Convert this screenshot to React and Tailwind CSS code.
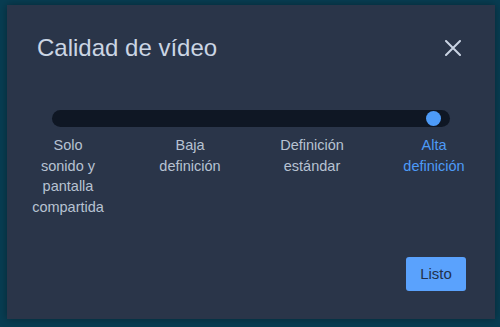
import React from "react";

const levels = [
  "Solo sonido y pantalla compartida",
  "Baja definición",
  "Definición estándar",
  "Alta definición",
];

const CloseIcon = () => (
  <svg width="16" height="16" viewBox="0 0 16 16" fill="none">
    <path
      d="M1 1L15 15M15 1L1 15"
      stroke="#c9d3e3"
      strokeWidth="2"
      strokeLinecap="round"
    />
  </svg>
);

const App = () => {
  const active = 3;

  return (
    <div
      className="w-[500px] h-[327px] bg-[#083d52] pt-[5px] pl-[7px] overflow-hidden"
      style={{ fontFamily: '"Liberation Sans", Arial, sans-serif' }}
    >
      <div className="w-[488px] h-[314px] bg-[#2a3549] shadow-[0_0_8px_rgba(0,0,0,0.35)] flex flex-col">
        {/* Header */}
        <div className="flex items-center justify-between pt-[29px] pl-[30px] pr-[34px]">
          <h2 className="text-[24px] leading-[28px] text-[#cbd5e4]">
            Calidad de vídeo
          </h2>
          <button className="flex items-center justify-center">
            <CloseIcon />
          </button>
        </div>

        {/* Slider */}
        <div className="mt-[48px] mx-[45px] h-[17px] rounded-full bg-[#0f1724] flex items-center justify-end pr-[9px]">
          <div className="w-[15px] h-[15px] rounded-full bg-[#4d9bf8]" />
        </div>

        {/* Labels */}
        <div className="grid grid-cols-4 mt-[8px]">
          {levels.map((label, i) => (
            <div key={label} className="flex justify-center">
              <p
                className={`w-[74px] text-center text-[14.5px] leading-[20.5px] ${
                  i === active ? "text-[#4d9bf8]" : "text-[#b7c2d2]"
                }`}
              >
                {label}
              </p>
            </div>
          ))}
        </div>

        {/* Footer */}
        <div className="mt-auto flex justify-end pr-[29px] pb-[28px]">
          <button className="w-[60px] h-[34px] rounded-[3px] bg-[#5aa2fd] text-[#22314a] text-[15px]">
            Listo
          </button>
        </div>
      </div>
    </div>
  );
};

export default App;
